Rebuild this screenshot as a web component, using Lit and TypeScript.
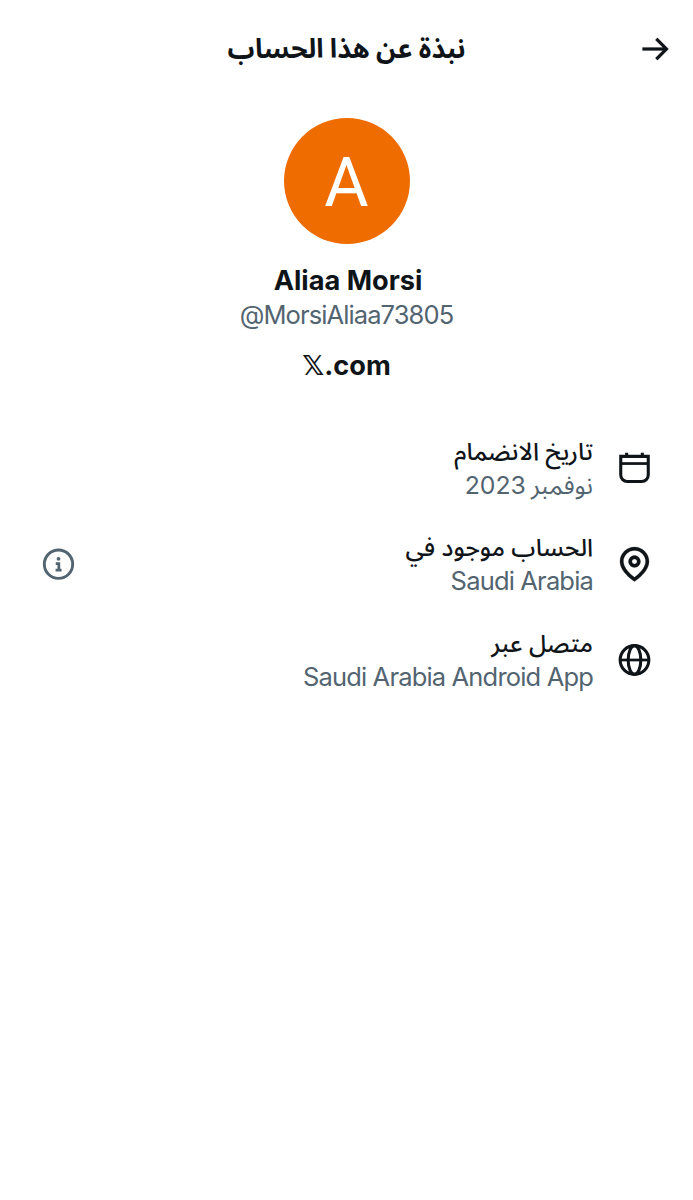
import { LitElement, html, css, svg } from "lit";
import { customElement } from "lit/decorators.js";

const calendar = svg`<g fill="none" stroke="currentColor"><path stroke-width="1.8" d="M3.95 4.9h16.1v10.9a3.8 3.8 0 0 1-3.8 3.8h-8.5a3.8 3.8 0 0 1-3.8-3.8z"/><path stroke-width="1.6" d="M3.95 9.1h16.1"/><path stroke-width="1.8" d="M7.4 2.8v2M16.6 2.8v2"/></g>`;
const pin = svg`<path fill="currentColor" stroke="currentColor" stroke-width=".15" transform="translate(0 -.25)" d="M12 7c-1.93 0-3.5 1.57-3.5 3.5S10.07 14 12 14s3.5-1.57 3.5-3.5S13.93 7 12 7zm0 5c-.827 0-1.5-.673-1.5-1.5S11.173 9 12 9s1.5.673 1.5 1.5S12.827 12 12 12zm0-10c-4.687 0-8.5 3.813-8.5 8.5 0 5.967 7.621 11.116 7.945 11.332l.555.37.555-.37c.324-.216 7.945-5.365 7.945-11.332C20.5 5.813 16.687 2 12 2zm0 17.77c-1.665-1.241-6.5-5.196-6.5-9.27C5.5 6.916 8.416 4 12 4s6.5 2.916 6.5 6.5c0 4.073-4.835 8.028-6.5 9.27z"/>`;
const globe = svg`<g fill="none" stroke="currentColor" stroke-width="1.8"><circle cx="12" cy="11.7" r="8.4"/><ellipse cx="12" cy="11.7" rx="3.7" ry="8.4"/><path stroke-width="1.6" d="M3.6 11.7h16.8"/></g>`;

@customElement("app-root")
export class AppRoot extends LitElement {
  static styles = css`
    :host {
      display: block;
      height: 1200px;
      background: #fff;
      color: #0f1419;
      font-family: Inter, "Noto Sans Arabic", "Noto Sans", "DejaVu Sans", sans-serif;
      overflow: hidden;
    }
    svg { display: block; flex: none; }
    .header {
      display: grid;
      grid-template-columns: 60px 1fr 60px;
      align-items: center;
      height: 97px;
    }
    .back { width: 36px; height: 36px; margin-inline-start: 19px; }
    .title { margin: 0 0 1px; text-align: center; font-size: 26.8px; font-weight: 700; line-height: 40px; white-space: nowrap; }
    .profile { display: flex; flex-direction: column; align-items: center; padding-top: 21.4px; }
    .avatar {
      width: 126px; height: 126px; border-radius: 50%;
      background: #ef6c00; color: #fff;
      display: flex; align-items: center; justify-content: center;
      font: 400 68px/122px Roboto, sans-serif;
    }
    .letter { padding-top: 4px; }
    .name { margin-top: 19.6px; padding-left: 3px; font-size: 27.2px; line-height: 34px; font-weight: 700; }
    .handle { font-size: 25.5px; line-height: 34px; color: #536471; letter-spacing: -0.9px; }
    .site { margin-top: 16.6px; font-size: 27.2px; line-height: 34px; font-weight: 700; }
    .rows { display: flex; flex-direction: column; gap: 28px; padding: 51.4px 38px 0 38px; }
    .row { display: flex; align-items: center; height: 68px; }
    .icon, .info { width: 41px; height: 41px; margin-top: 1.2px; }
    .text { flex: 1; margin-inline-start: 21px; }
    .label, .value { line-height: 34px; white-space: nowrap; }
    .label { font-size: 24.3px; font-weight: 500; }
    .value { font-size: 24.8px; word-spacing: -2px; color: #536471; }
    .value.latin { font-size: 25.5px; letter-spacing: -0.83px; word-spacing: 0; }
    .info { color: #536471; }
  `;

  private row(icon: unknown, label: string, value: string, info = false) {
    const latin = /^[A-Za-z]/.test(value);
    return html`<div class="row">
      <svg class="icon" viewBox="0 0 24 24">${icon}</svg>
      <div class="text">
        <div class="label">${label}</div>
        <div class="value ${latin ? "latin" : ""}">${value}</div>
      </div>
      ${info
        ? html`<svg class="info" viewBox="0 0 24 24"><circle cx="12" cy="11.8" r="8.3" fill="none" stroke="currentColor" stroke-width="1.7"/><circle cx="12" cy="8.7" r="1.1" fill="currentColor"/><path d="M10.4 11.5h1.8v3.6M10.3 15.3h3.5" fill="none" stroke="currentColor" stroke-width="1.6"/></svg>`
        : null}
    </div>`;
  }

  render() {
    return html`<div dir="rtl" lang="ar">
      <header class="header">
        <svg class="back" viewBox="0 0 24 24"><path fill="currentColor" stroke="currentColor" stroke-width=".15" d="M16.586 13l-5.043 5.04 1.414 1.42L20.414 12l-7.457-7.46-1.414 1.42L16.586 11H3v2h13.586z"/></svg>
        <h1 class="title">نبذة عن هذا الحساب</h1>
      </header>
      <section class="profile">
        <div class="avatar"><span class="letter">A</span></div>
        <div class="name" dir="ltr">Aliaa Morsi</div>
        <div class="handle" dir="ltr">@MorsiAliaa73805</div>
        <div class="site" dir="ltr">𝕏.com</div>
      </section>
      <section class="rows">
        ${this.row(calendar, "تاريخ الانضمام", "نوفمبر 2023")}
        ${this.row(pin, "الحساب موجود في", "Saudi Arabia", true)}
        ${this.row(globe, "متصل عبر", "Saudi Arabia Android App")}
      </section>
    </div>`;
  }
}
